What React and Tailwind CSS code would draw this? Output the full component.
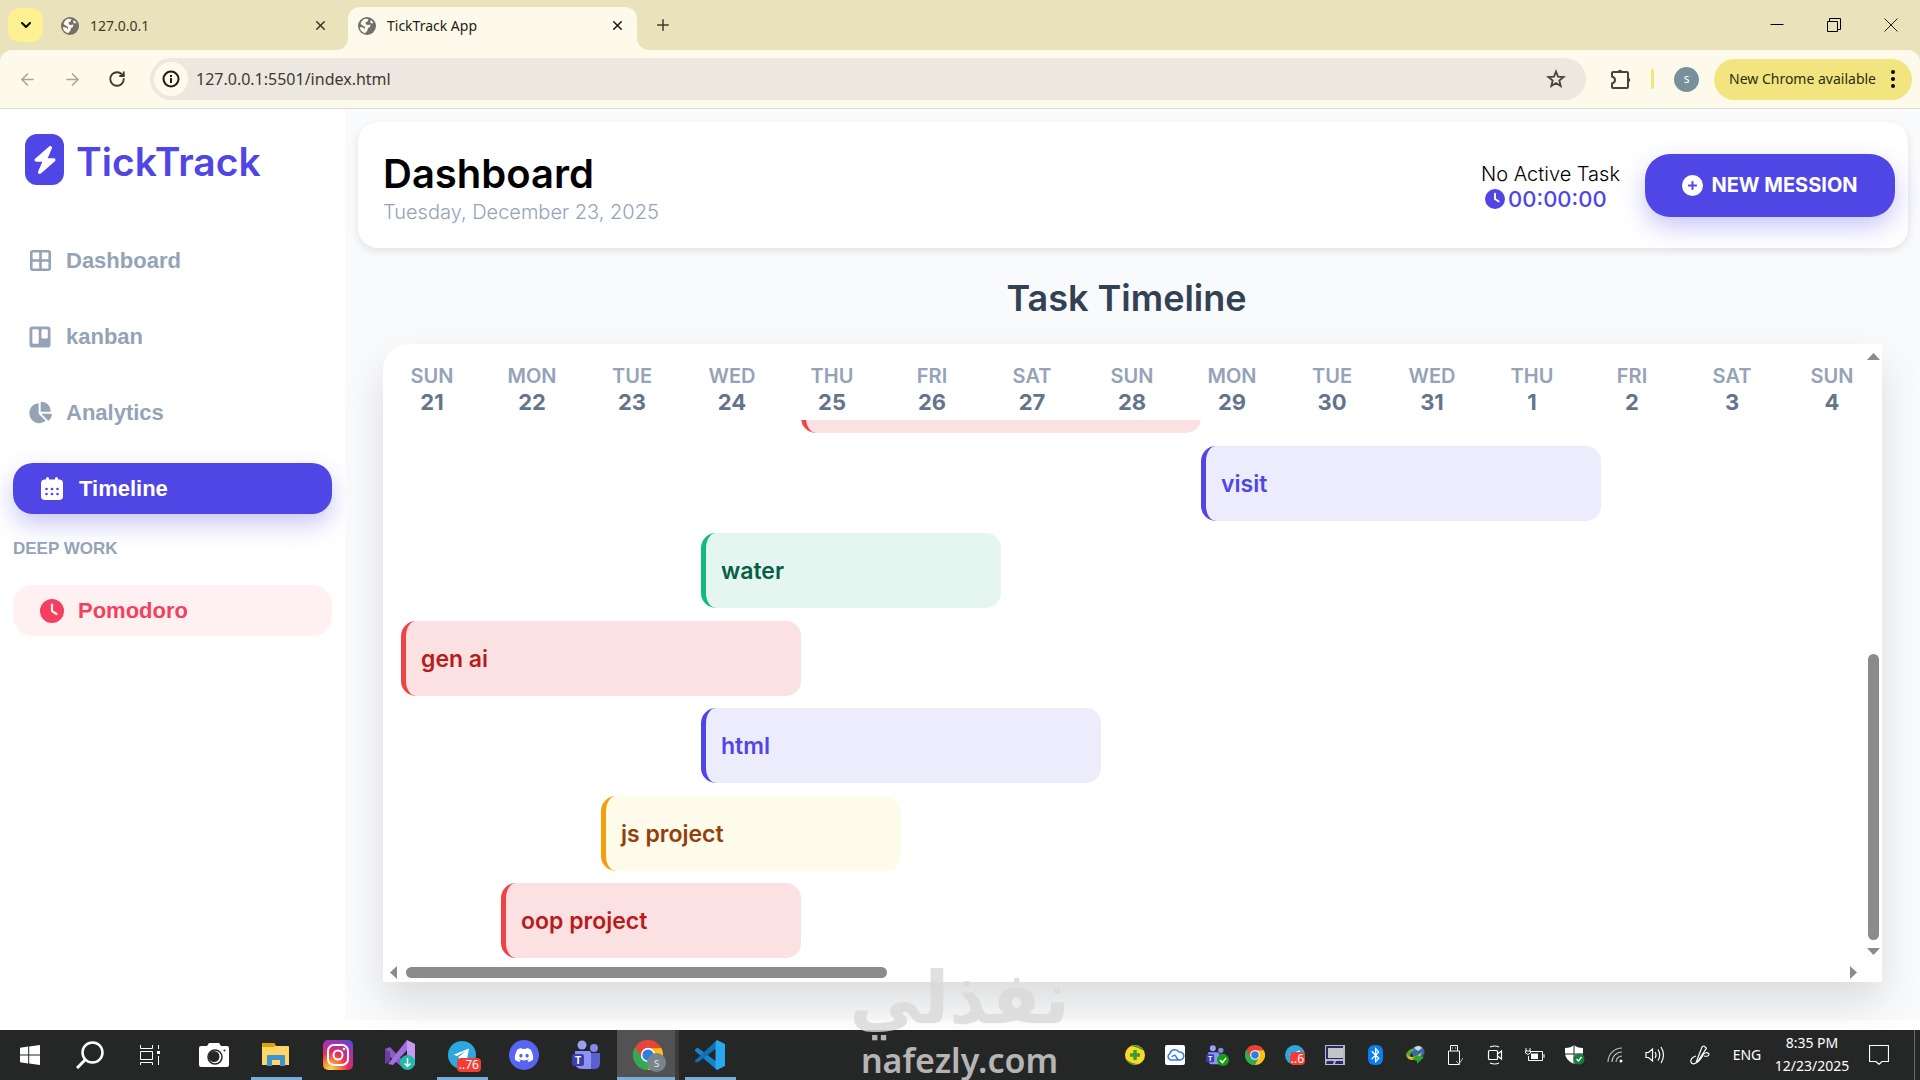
import React from 'react';
import {
  FaBolt,
  FaChartPie,
  FaCirclePlus,
  FaClock,
  FaDiscord,
  FaRegStar,
  FaTrello,
  FaBluetoothB,
} from 'react-icons/fa6';
import { ArrowLeft, ArrowRight, ChevronDown, Plus, RotateCw, X } from 'lucide-react';

const days = [
  ['SUN', 21], ['MON', 22], ['TUE', 23], ['WED', 24], ['THU', 25],
  ['FRI', 26], ['SAT', 27], ['SUN', 28], ['MON', 29], ['TUE', 30],
  ['WED', 31], ['THU', 1], ['FRI', 2], ['SAT', 3], ['SUN', 4],
];

const red = 'border-[#ef4444] bg-[#fce1e2] text-[#b91c1c]';
const indigo = 'border-[#4f46e5] bg-[#edecfc] text-[#4f46e5]';
const green = 'border-[#10b981] bg-[#e5f6f0] text-[#065f46]';
const amber = 'border-[#f59e0b] bg-[#fffbea] text-[#92400e]';

const tasks = [
  { name: '', place: 'col-start-5 col-span-4', color: red },
  { name: 'visit', place: 'col-start-9 col-span-4', color: indigo },
  { name: 'water', place: 'col-start-4 col-span-3', color: green },
  { name: 'gen ai', place: 'col-start-1 col-span-4', color: red },
  { name: 'html', place: 'col-start-4 col-span-4', color: indigo },
  { name: 'js project', place: 'col-start-3 col-span-3', color: amber },
  { name: 'oop project', place: 'col-start-2 col-span-3', color: red },
];

/* ---------- browser ---------- */

function GlobeIcon() {
  return (
    <svg viewBox="0 0 18 18" className="h-[18px] w-[18px] shrink-0">
      <circle cx="9" cy="9" r="9" fill="#6f6f6b" />
      <path d="M7.5 1.8 L10.5 2 L9.5 4.5 L7.5 5.5 L8 7.5 L10 8 L12.5 7.5 L12 10 L10 11 L9.5 13.5 L7 16.2 C4 15.5 2 13 1.8 10 L5 10.5 L7 12 L7 10 L4.5 8.5 L2.5 7 C3.3 4 5 2.3 7.5 1.8 Z" fill="#fdf8e8" />
      <path d="M13 3 L15.5 6 L13.5 6.5 L12 5 Z" fill="#fdf8e8" />
    </svg>
  );
}

function TabStrip() {
  return (
    <div className="flex h-[50px] shrink-0 items-end bg-[#eae2ba] font-['Noto_Sans',sans-serif] text-sm text-[#3d3a2a]">
      <button aria-label="Search tabs" className="mb-2 ml-2 flex h-[34px] w-[35px] items-center justify-center rounded-xl bg-[#fdf192] text-black">
        <ChevronDown size={16} strokeWidth={3} />
      </button>
      <div className="flex h-[43px] w-[293px] items-center gap-[11px] pr-[8px] pb-[6px] pl-[18px]">
        <GlobeIcon />
        <span className="flex-1">127.0.0.1</span>
        <button aria-label="Close tab"><X size={15} strokeWidth={2.5} /></button>
      </div>
      <span className="h-3 w-3 bg-[#fefaeb]"><span className="block h-3 w-3 rounded-br-xl bg-[#eae2ba]" /></span>
      <div className="flex h-[43px] w-[289px] items-center gap-[11px] rounded-t-xl bg-[#fefaeb] pr-3 pb-[6px] pl-[10px] text-[#1f1d14]">
        <GlobeIcon />
        <span className="flex-1">TickTrack App</span>
        <button aria-label="Close tab"><X size={15} strokeWidth={2.5} /></button>
      </div>
      <span className="h-3 w-3 bg-[#fefaeb]"><span className="block h-3 w-3 rounded-bl-xl bg-[#eae2ba]" /></span>
      <button aria-label="New tab" className="mb-4 ml-[5px]"><Plus size={18} strokeWidth={2} /></button>
      <div className="ml-auto flex h-full items-center">
        <button aria-label="Minimize" className="flex w-[57px] justify-center">
          <svg viewBox="0 0 14 14" className="h-[14px] w-[14px]"><path d="M0.5 6.5 H13.5" stroke="#000" /></svg>
        </button>
        <button aria-label="Restore" className="flex w-[57px] justify-center">
          <svg viewBox="0 0 14 14" className="h-[14px] w-[14px]" fill="none" stroke="#000"><path d="M0.5 3.5 H10.5 V13.5 H0.5 Z M2.5 3.5 V0.5 H13.5 V11.5 H10.5" /></svg>
        </button>
        <button aria-label="Close" className="flex w-[58px] justify-center">
          <svg viewBox="0 0 14 14" className="h-[14px] w-[14px]"><path d="M0.5 0.5 L13.5 13.5 M13.5 0.5 L0.5 13.5" stroke="#222" /></svg>
        </button>
      </div>
    </div>
  );
}

function Toolbar() {
  return (
    <div className="bg-[#eae2ba]">
      <div className="flex h-[59px] items-center rounded-t-xl border-b border-[#dedcd2] bg-[#fefaeb] pr-2 font-['Noto_Sans',sans-serif]">
        <button aria-label="Back" className="ml-[18px] text-[#aaa798]"><ArrowLeft size={19} /></button>
        <button aria-label="Forward" className="ml-[26px] text-[#aaa798]"><ArrowRight size={19} /></button>
        <button aria-label="Reload" className="ml-[26px] text-[#3a382c]"><RotateCw size={18} strokeWidth={2.4} /></button>
        <div className="ml-[24px] flex h-[42px] flex-1 items-center rounded-full bg-[#ece8df] pr-5 pl-1">
          <span className="flex h-[34px] w-[34px] items-center justify-center rounded-full bg-[#fefaeb]">
            <svg viewBox="0 0 18 18" className="h-[18px] w-[18px]" fill="none" stroke="#1f1d14" strokeWidth="2">
              <circle cx="9" cy="9" r="7.5" />
              <path d="M9 8 V13 M9 5 V7" />
            </svg>
          </span>
          <input aria-label="Address" defaultValue="127.0.0.1:5501/index.html" className="ml-2 min-w-0 flex-1 bg-transparent text-base text-[#3c3a33] outline-none" />
          <button aria-label="Bookmark" className="text-[#45433a]">
            <svg viewBox="0 0 20 20" className="h-5 w-5" fill="none" stroke="#45433a" strokeWidth="1.8"><path d="M10 2.5 L12 7.6 L17.6 8 L13.300 11.600 L14.700 17 L10 14 L5.300 17 L6.700 11.600 L2.400 8 L8 7.600 Z" /></svg>
          </button>
        </div>
        <button aria-label="Extensions" className="ml-6">
          <svg viewBox="0 0 22 22" className="h-[22px] w-[22px]" fill="none" stroke="#45433a" strokeWidth="2">
            <path d="M3 4 H17 Q18 4 18 5 V19 Q18 20 17 20 H3 Q2 20 2 19 V15.5 Q5 14.5 5 12 Q5 9.5 2 8.500 V5 Q2 4 3 4 Z" />
            <path d="M8 3 A2.200 2.200 0 0 1 12 3 Z M19 10 A2.200 2.200 0 0 1 19 14 Z" fill="#45433a" stroke="none" />
          </svg>
        </button>
        <span className="ml-[19px] h-5 w-[3px] rounded bg-[#f2e47e]" />
        <span className="ml-5 flex h-[25px] w-[25px] items-center justify-center rounded-full bg-[#78909c] text-xs text-white">s</span>
        <button className="ml-[15px] flex h-[41px] w-[198px] items-center justify-between rounded-full bg-[#f2e47e] pr-[17px] pl-[15px] text-sm text-[#2f2c10]">
          New Chrome available
          <svg viewBox="0 0 4 18" className="h-[18px] w-1"><circle cx="2" cy="2" r="2" /><circle cx="2" cy="9" r="2" /><circle cx="2" cy="16" r="2" /></svg>
        </button>
      </div>
    </div>
  );
}

/* ---------- app ---------- */

function DashboardIcon() {
  return (
    <svg viewBox="0 0 21 21" className="h-[21px] w-[21px]" fill="none" stroke="currentColor">
      <rect x="1.300" y="1.300" width="18.400" height="18.400" rx="1.500" strokeWidth="2.600" />
      <path d="M10.500 1 V20 M1 10.500 H20" strokeWidth="2.600" />
    </svg>
  );
}

function CalendarIcon() {
  return (
    <svg viewBox="0 0 22 23" className="h-[23px] w-[22px]">
      <path d="M4 2.500 H18 Q22 2.500 22 6 V19 Q22 23 18 23 H4 Q0 23 0 19 V6 Q0 2.500 4 2.500 Z" fill="#fff" />
      <path d="M6.500 1.500 V5 M15.500 1.500 V5" stroke="#fff" strokeWidth="3" strokeLinecap="round" />
      <g fill="#4f46e5">
        <circle cx="5.500" cy="12" r="1.300" /><circle cx="11" cy="12" r="1.300" /><circle cx="16.500" cy="12" r="1.300" />
        <circle cx="5.500" cy="17" r="1.300" /><circle cx="11" cy="17" r="1.300" /><circle cx="16.500" cy="17" r="1.300" />
      </g>
    </svg>
  );
}

function Sidebar() {
  const link = 'flex h-[51px] items-center gap-[14px] px-[15px] text-[#94a3b8]';
  const icon = 'flex w-6 shrink-0 justify-center';
  return (
    <aside className="w-[345px] shrink-0 bg-white px-[13px] pt-[25px] font-['Liberation_Sans',Arial,sans-serif] text-[22px] font-bold">
      <div className="flex items-center gap-3 pl-3">
        <span className="flex h-[51px] w-[39px] items-center justify-center rounded-xl bg-[#4f46e5] text-white"><FaBolt size={28} /></span>
        <span className="pt-1 font-[Inter,sans-serif] text-[39px] leading-[47px] font-semibold text-[#4f46e5]">TickTrack</span>
      </div>
      <nav className="mt-[50px] flex flex-col gap-[25px]">
        <a href="#dashboard" className={link}><span className={icon}><DashboardIcon /></span>Dashboard</a>
        <a href="#kanban" className={link}><span className={icon}><FaTrello size={24} /></span>kanban</a>
        <a href="#analytics" className={link}><span className={icon}><FaChartPie size={25} /></span>Analytics</a>
        <a href="#timeline" className="flex h-[51px] items-center gap-4 rounded-[20px] bg-[#4f46e5] px-7 text-white shadow-[0_10px_25px_rgba(79,70,229,0.3)]">
          <CalendarIcon />Timeline
        </a>
      </nav>
      <h3 className="mt-[25px] text-[17px] leading-5 text-[#94a3b8]">DEEP WORK</h3>
      <a href="#pomodoro" className="mt-[26px] flex h-[51px] items-center gap-[14px] rounded-[20px] bg-[#fff1f2] px-[27px] text-[#f43f5e]">
        <FaClock size={24} />Pomodoro
      </a>
    </aside>
  );
}

function PageHeader() {
  return (
    <header className="flex h-[126px] shrink-0 items-center rounded-[20px] bg-white pr-[13px] pl-[25px] shadow-[0_3px_8px_rgba(0,0,0,0.1)]">
      <div className="flex-1 pt-[5px]">
        <h1 className="text-[40px] leading-[48px] font-semibold text-black">Dashboard</h1>
        <p className="text-xl leading-7 font-light text-[#94a3b8]">Tuesday, December 23, 2025</p>
      </div>
      <div className="mr-[25px] pt-1">
        <p className="text-xl leading-6 font-light text-black">No Active Task</p>
        <p className="flex items-center gap-[3px] pl-1 text-[22px] leading-[26px] font-medium text-[#4f46e5]"><FaClock size={20} />00:00:00</p>
      </div>
      <button className="flex h-[63px] w-[250px] items-center justify-center gap-2 rounded-[25px] bg-[#4f46e5] text-xl font-bold text-white shadow-[0_10px_25px_rgba(79,70,229,0.3)]">
        <FaCirclePlus size={21} />NEW MESSION
      </button>
    </header>
  );
}

function Timeline() {
  return (
    <section className="flex min-h-0 flex-1 flex-col pr-[26px] pb-[38px] pl-[25px]">
      <h2 className="mt-5 pr-3 text-center text-[36px] leading-[60px] font-semibold text-[#334155]">Task Timeline</h2>
      <div className="mt-4 flex min-h-0 flex-1 rounded-tl-[25px] bg-white shadow-[0_20px_40px_rgba(0,0,0,0.12)]">
        <div className="flex min-w-0 flex-1 flex-col">
          <div className="h-[76px] shrink-0 overflow-hidden pt-5">
            <div className="-ml-px grid grid-cols-[repeat(15,100px)] text-center">
              {days.map(([day, date], i) => (
                <div key={i}>
                  <div className="text-xl leading-6 font-semibold text-[#94a3b8]">{day}</div>
                  <div className="text-[22px] leading-7 font-bold text-[#64748b]">{date}</div>
                </div>
              ))}
            </div>
          </div>
          <div className="flex min-h-0 flex-1 flex-col justify-end overflow-hidden">
            <div className="flex h-[600px] shrink-0 flex-col justify-between">
              {tasks.map((task, i) => (
                <div key={i} className="grid grid-cols-[repeat(14,100px)] pl-[18px]">
                  <div className={`${task.place} ${task.color} flex h-[75px] items-center rounded-[15px] border-l-[5px] pt-[2px] pl-[15px] text-[23px] font-semibold`}>
                    {task.name}
                  </div>
                </div>
              ))}
            </div>
          </div>
          <div className="flex h-6 shrink-0 items-center gap-[9px] pt-1 pl-[7px]">
            <svg viewBox="0 0 7 13" className="h-[13px] w-[7px]"><path d="M7 0 V13 L0 6.500 Z" fill="#8b8b8b" /></svg>
            <span className="h-[11px] w-[481px] rounded-full bg-[#8b8b8b]" />
            <svg viewBox="0 0 7 13" className="mr-2 ml-auto h-[13px] w-[7px]"><path d="M0 0 V13 L7 6.500 Z" fill="#8b8b8b" /></svg>
          </div>
        </div>
        <div className="flex w-[17px] shrink-0 flex-col items-center justify-end gap-2 pt-[9px] pb-[27px]">
          <svg viewBox="0 0 13 7" className="mb-auto h-[7px] w-[13px]"><path d="M0 7 H13 L6.500 0 Z" fill="#8b8b8b" /></svg>
          <span className="h-[286px] w-[11px] rounded-full bg-[#8b8b8b]" />
          <svg viewBox="0 0 13 7" className="h-[7px] w-[13px]"><path d="M0 0 H13 L6.500 7 Z" fill="#8b8b8b" /></svg>
        </div>
      </div>
    </section>
  );
}

/* ---------- taskbar ---------- */

function ChromeIcon({ className }) {
  return (
    <svg viewBox="0 0 48 48" className={className}>
      <path d="M24 24 L3.200 12 A24 24 0 0 1 44.800 12 Z" fill="#ea4335" />
      <path d="M24 24 L44.800 12 A24 24 0 0 1 24 48 Z" fill="#fbc116" />
      <path d="M24 24 L24 48 A24 24 0 0 1 3.200 12 Z" fill="#34a853" />
      <path d="M24 13 H45.300 L33.500 29.500 Z" fill="#fbc116" />
      <path d="M33.500 29.500 L24 48 L14.500 29.500 Z" fill="#34a853" />
      <path d="M3.200 12 L14.500 30 L24 13 Z" fill="#ea4335" />
      <path d="M3.200 12 L14.500 30 L24 48 A24 24 0 0 1 3.200 12 Z" fill="#34a853" />
      <circle cx="24" cy="24" r="11.500" fill="#fff" />
      <circle cx="24" cy="24" r="9" fill="#2f7de1" />
    </svg>
  );
}

function TeamsIcon({ className }) {
  return (
    <svg viewBox="0 0 28 30" className={className}>
      <circle cx="10" cy="5" r="4.500" fill="#9aa0f5" />
      <circle cx="22" cy="8" r="4" fill="#8289ea" />
      <path d="M17 13 H28 V23 Q28 29 22 29 H17 Z" fill="#5b5fd0" />
      <path d="M3 11 H17 Q19 11 19 13 V29 H10 Q3 29 3 22 Z" fill="#8c93f4" />
      <rect x="0" y="14" width="12" height="12" rx="2" fill="#3b3fae" />
      <text x="6" y="23.500" textAnchor="middle" fontSize="10" fontWeight="700" fontFamily="Inter, sans-serif" fill="#fff">T</text>
    </svg>
  );
}

function TelegramIcon({ className }) {
  return (
    <svg viewBox="0 0 28 28" className={className}>
      <circle cx="14" cy="14" r="14" fill="#2ea6de" />
      <path d="M5.500 13.800 L21 7.500 L18.500 21 L13.500 17.500 L11 20 L10.500 16 L18 10 L9 15 Z" fill="#fff" />
    </svg>
  );
}

const cell = 'flex h-full w-[62px] items-center justify-center';
const openCell = 'relative flex h-full w-[62px] items-center justify-center after:absolute after:bottom-0 after:h-[3px] after:w-[51px] after:bg-[#76aee0]';

function PinnedApps() {
  return (
    <div className="flex h-full">
      <div className="mr-[3px] flex">
        <button aria-label="Start" className="flex w-[60px] items-center justify-center">
          <svg viewBox="0 0 20 20" className="h-5 w-5" fill="#fff"><path d="M0 2.800 L8.200 1.600 V9.500 H0 Z M9.200 1.500 L20 0 V9.500 H9.200 Z M0 10.500 H8.200 V18.400 L0 17.200 Z M9.200 10.500 H20 V20 L9.200 18.500 Z" /></svg>
        </button>
        <button aria-label="Search" className="flex w-[60px] items-center justify-center">
          <svg viewBox="0 0 28 28" className="h-7 w-7" fill="none" stroke="#fff" strokeWidth="2.500"><circle cx="16.500" cy="11.500" r="10" /><path d="M9.500 18.500 L1 27" strokeWidth="3" /></svg>
        </button>
        <button aria-label="Task view" className="flex w-[60px] items-center justify-center">
          <svg viewBox="0 0 20 20" className="h-5 w-5" fill="none" stroke="#fff"><path d="M0.500 0 V3.500 H12.500 V0 M0.500 6.500 H12.500 V14.500 H0.500 Z M0.500 20 V17.500 H12.500 V20 M18.500 0 V4 M18.500 11 V20" /><path d="M17 6 H20 V9 H17 Z" fill="#fff" stroke="none" /></svg>
        </button>
      </div>
      <button aria-label="Camera" className={cell}>
        <svg viewBox="0 0 30 24" className="h-6 w-[30px]"><path d="M2 3 H8 L10 0 H20 L22 3 H28 Q30 3 30 5 V22 Q30 24 28 24 H2 Q0 24 0 22 V5 Q0 3 2 3 Z" fill="#fff" /><circle cx="16" cy="14" r="7" fill="none" stroke="#262626" strokeWidth="1.500" /><circle cx="15" cy="13.500" r="5.500" fill="#262626" /><circle cx="25.500" cy="7.500" r="1" fill="#262626" /></svg>
      </button>
      <button aria-label="File Explorer" className={openCell}>
        <svg viewBox="0 0 28 24" className="h-6 w-7"><path d="M0 0 H12 L14 3 H26 Q27 3 27 4 V22 H0 Z" fill="#ffd766" /><path d="M0 1 Q0 0 1 0 H12 L13.500 2 L12 4 H0 Z" fill="#e0a10e" /><path d="M5 13 Q5 12 6 12 H22 Q23 12 23 13 V23 H18 V17 H10 V23 H5 Z" fill="#3f93cf" /></svg>
      </button>
      <button aria-label="Instagram" className={cell}>
        <svg viewBox="0 0 30 30" className="h-[30px] w-[30px]">
          <defs>
            <radialGradient id="insta" cx="0.250" cy="1" r="1.150"><stop offset="0" stopColor="#fedb65" /><stop offset="0.250" stopColor="#fb8b35" /><stop offset="0.500" stopColor="#e13259" /><stop offset="0.750" stopColor="#b42ea5" /><stop offset="1" stopColor="#5b4ad0" /></radialGradient>
          </defs>
          <rect width="30" height="30" rx="5" fill="url(#insta)" />
          <rect x="5" y="5" width="20" height="20" rx="6" fill="none" stroke="#fff" strokeWidth="2" />
          <circle cx="15" cy="15" r="4.500" fill="none" stroke="#fff" strokeWidth="2" /><circle cx="21" cy="9" r="1.300" fill="#fff" />
        </svg>
      </button>
      <button aria-label="Visual Studio Installer" className={cell}>
        <svg viewBox="0 0 30 30" className="h-[30px] w-[30px]"><path d="M0 9 L5 7 L18 21 L22 25 V29 L17 27 L5 17 V21 L0 23 Z" fill="#8b5cc2" /><path d="M0 9 L5 12 V21 L0 24 Z" fill="#6b3fa0" /><path d="M3 24 L22 0 L24 8 L8 25 Z" fill="#a56de2" /><path d="M22 0 L30 4 V25 L22 29 Z" fill="#c49af5" /><circle cx="22.500" cy="22.500" r="7.500" fill="#22b8a6" /><path d="M22.500 18 V26 M19.500 23.500 L22.500 26.500 L25.500 23.500" fill="none" stroke="#fff" strokeWidth="1.500" /></svg>
      </button>
      <button aria-label="Telegram" className={openCell}>
        <TelegramIcon className="h-7 w-7" />
        <span className="absolute right-3 bottom-2 rounded bg-[#f23c34] px-[2px] font-['Noto_Sans',sans-serif] text-xs leading-[14px] text-white">..76</span>
      </button>
      <button aria-label="Discord" className={cell}>
        <span className="flex h-[30px] w-[30px] items-center justify-center rounded-full bg-[#5865f2] text-white"><FaDiscord size={20} /></span>
      </button>
      <button aria-label="Teams" className={cell}><TeamsIcon className="h-[30px] w-7" /></button>
      <button aria-label="Chrome" className="relative flex w-[62px] items-center justify-center border-r-4 border-[#3c3c3c] bg-[#525252] pl-1 after:absolute after:inset-x-0 after:bottom-0 after:h-[3px] after:bg-[#76aee0]">
        <ChromeIcon className="h-[30px] w-[30px]" />
        <span className="absolute right-[9px] bottom-[8px] h-[19px] w-[19px] rounded-full bg-[#78858c] text-xs leading-[19px] text-[#d5dadd]">s</span>
      </button>
      <button aria-label="Visual Studio Code" className={openCell}>
        <svg viewBox="0 0 30 30" className="h-[30px] w-[30px]"><path d="M0 9.500 L2.500 7.500 L22 22 V30 L0 11 Z" fill="#1684cc" /><path d="M0 20.500 L22 0 V8 L2.500 22.500 L0 21.500 Z" fill="#1070b3" /><path d="M22 0 L30 4 V26 L22 30 L20.500 28 V2 Z" fill="#29a8ee" /></svg>
      </button>
    </div>
  );
}

const trayCell = 'flex w-10 items-center justify-center';

function Tray() {
  return (
    <div className="ml-auto flex h-full font-['Noto_Sans',sans-serif] text-white">
      <span className={trayCell}><svg viewBox="0 0 20 20" className="h-5 w-5"><circle cx="10" cy="10" r="10" fill="#f8d92a" /><path d="M6 1 Q15 -2 19 6 Q13 2 6 1 Z M1 14 Q6 19 14 19 Q5 22 1 14 Z" fill="#3f9a2f" /><path d="M10 5 V15 M5 10 H15" stroke="#3f9a2f" strokeWidth="3.500" /></svg></span>
      <span className={trayCell}><svg viewBox="0 0 20 20" className="h-5 w-5"><rect width="20" height="20" rx="2" fill="#fff" /><path d="M14 15 H5.500 A3.500 3.500 0 0 1 5 8.500 A5 5 0 0 1 14 7 A4 4 0 0 1 15.500 15 Q12 15 11 11.500 Q9 9 7 12" fill="none" stroke="#3b7be8" strokeWidth="1.500" /></svg></span>
      <span className={trayCell}><span className="relative"><TeamsIcon className="h-5 w-[19px]" /><svg viewBox="0 0 12 12" className="absolute -right-1 -bottom-px h-3 w-3"><circle cx="6" cy="6" r="6" fill="#13a10e" /><path d="M3 6 L5.500 8.500 L9 4" fill="none" stroke="#fff" strokeWidth="1.500" /></svg></span></span>
      <span className={trayCell}><ChromeIcon className="h-5 w-5" /></span>
      <span className={trayCell}><span className="relative"><TelegramIcon className="h-5 w-5" /><span className="absolute right-0 bottom-0 rounded-sm bg-[#f23c34] px-px text-xs leading-[13px]">..6</span></span></span>
      <span className={trayCell}><svg viewBox="0 0 20 20" className="h-5 w-5"><rect width="20" height="20" fill="#b9b9c4" /><path d="M1 1 H18 V14 H1 Z" fill="#2b2872" /><path d="M3 3 H18 V13 H3 Z" fill="#c4c4c4" /><path d="M2 16 H9 L8 19 H1 Z M11 16 H18 L18 19 H10 Z" fill="#2b2872" /></svg></span>
      <span className={trayCell}><span className="flex h-5 w-[15px] items-center justify-center rounded-[6px] bg-[#0a7df0]"><FaBluetoothB size={16} /></span></span>
      <span className={trayCell}><svg viewBox="0 0 20 20" className="h-5 w-5"><circle cx="13" cy="7" r="6.500" fill="#3568b8" /><path d="M9 3 Q14 -1 17 3 L13 6 Z" fill="#d8dcc8" /><path d="M1 9 Q6 1 10 5 Q3 8 6 15 Q1 14 1 9 Z" fill="#58a83a" /><path d="M2 10 Q8 15 17 7 Q15 15 8 15 Q3 15 2 10 Z" fill="#e9b92b" /><path d="M7 14 L13 9 L13 11 L19 12 L12 19 L12 16 Z" fill="#2fa52f" /></svg></span>
      <span className={trayCell}><svg viewBox="0 0 16 20" className="h-5 w-4" fill="none" stroke="#fff"><path d="M3.500 6 V0.500 H10.500 V6 M1.500 6 H12.500 V19.500 H1.500 Z M5 3 H6 M8 3 H9" /><path d="M9 16 L12 19 L16 13" stroke="#bbb" /></svg></span>
      <span className={trayCell}><svg viewBox="0 0 16 20" className="h-5 w-4" fill="none" stroke="#fff" strokeWidth="1.200"><rect x="1.500" y="5.500" width="9" height="9" rx="1" /><path d="M10.500 9 L14.500 6 V14 L10.500 11 M3 2 Q8 0 12 2 M3 18 Q8 20 12 18" /></svg></span>
      <span className={trayCell}><svg viewBox="0 0 20 14" className="h-[14px] w-5" fill="none" stroke="#fff"><path d="M5 3.500 H17.500 V12.500 H3.500 V8 M19 6 V10 M1 0 V3 M5 0 V3 M0.500 3 H5.500 V5 Q3 8 0.500 5 Z" /><path d="M6 5.500 H13 V11 H6 Z" fill="#fff" stroke="none" /></svg></span>
      <span className={trayCell}><svg viewBox="0 0 20 20" className="h-5 w-5"><path d="M9 0 Q12 3 18 3 V8 Q18 15 9 19 Q0 15 0 8 V3 Q6 3 9 0 Z" fill="#fff" /><path d="M9 0 V19 M0 9 H18" stroke="#252726" /><circle cx="14" cy="14" r="5.500" fill="#15803d" /><path d="M11.500 14 L13.500 16 L16.500 12" fill="none" stroke="#fff" strokeWidth="1.300" /></svg></span>
      <span className={trayCell}><svg viewBox="0 0 16 16" className="h-4 w-4" fill="none" stroke="#bbb" strokeWidth="1.200"><path d="M1 15 A14 14 0 0 1 15 1 M5 15 A10 10 0 0 1 15 5 M9 15 A6 6 0 0 1 15 9" /><circle cx="14" cy="14" r="1.500" fill="#fff" stroke="none" /></svg></span>
      <span className={trayCell}><svg viewBox="0 0 20 18" className="h-[18px] w-5" fill="none" stroke="#fff" strokeWidth="1.200"><path d="M1 6.500 H3.500 L7.500 3 V15 L3.500 11.500 H1 Z M10 6 Q12 9 10 12 M13 3.500 Q16.500 9 13 14.500 M16 1 Q21 9 16 17" /></svg></span>
      <span className="flex w-[50px] items-center justify-center"><svg viewBox="0 0 20 20" className="h-5 w-5" fill="none" stroke="#fff" strokeWidth="1.200"><path d="M7 15 L12 2 Q14 0 15 2 Q17 3 16 4 L8 16 L6 18 Z M6 11 Q0 13 1 17 Q2 20 6 18 Q10 16 13 10 Q16 6 19 9 Q19 12 14 11" /></svg></span>
      <span className="flex w-11 items-center justify-center text-sm">ENG</span>
      <div className="flex w-[86px] flex-col justify-center pb-[2px] text-center text-sm leading-[23px]"><span>8:35 PM</span><span>12/23/2025</span></div>
      <button aria-label="Notifications" className="flex w-12 items-center justify-center">
        <svg viewBox="0 0 20 20" className="h-5 w-5" fill="none" stroke="#fff" strokeWidth="1.200"><path d="M0.500 0.500 H19.500 V16.500 H13 L10 19.300 L7 16.500 H0.500 Z" /></svg>
      </button>
      <span className="mr-[5px] ml-[11px] w-px bg-[#6b6b6b]" />
    </div>
  );
}

function Watermark() {
  return (
    <div className="pointer-events-none absolute bottom-0 left-[853px] z-20 flex w-[213px] flex-col items-center text-[#d9d9d9] opacity-80">
      <span lang="ar" dir="rtl" className="font-['DejaVu_Sans',sans-serif] text-[72px] leading-[84px] font-bold">نفذلي</span>
      <span className="font-['Noto_Sans',sans-serif] text-[34px] leading-[40px] font-semibold">nafezly.com</span>
    </div>
  );
}

function App() {
  return (
    <div className="relative flex h-screen flex-col overflow-hidden bg-white">
      <TabStrip />
      <Toolbar />
      <div className="flex min-h-0 flex-1 pb-[10px]">
        <Sidebar />
        <main className="flex min-w-0 flex-1 flex-col bg-[#f9fafc] pt-[13px] pr-3 pl-[13px] font-[Inter,sans-serif]">
          <PageHeader />
          <Timeline />
        </main>
      </div>
      <footer className="z-10 flex h-[50px] shrink-0 bg-[#252726]">
        <PinnedApps />
        <Tray />
      </footer>
      <Watermark />
    </div>
  );
}

export default App;
